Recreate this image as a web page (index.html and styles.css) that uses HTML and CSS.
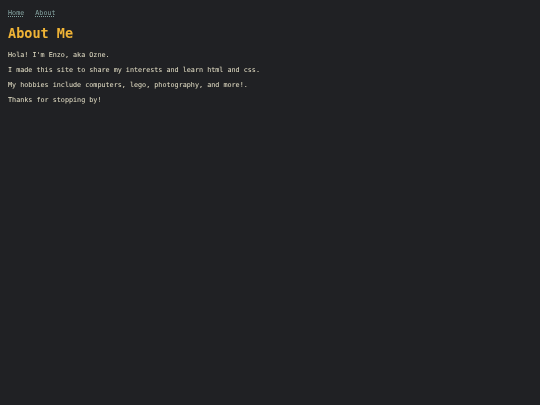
FILE: index.html
```html
<!DOCTYPE html>
<html lang="en">
<head>
<meta charset="utf-8">
<title>About Me</title>
<link rel="stylesheet" href="styles.css">
</head>
<body>
<nav class="nav">
  <a href="#" class="nav-link">Home</a>
  <a href="#" class="nav-link">About</a>
</nav>
<main class="content">
  <h1 class="title">About Me</h1>
  <p class="text">Hola! I'm Enzo, aka Ozne.</p>
  <p class="text">I made this site to share my interests and learn html and css.</p>
  <p class="text">My hobbies include computers, lego, photography, and more!.</p>
  <p class="text">Thanks for stopping by!</p>
</main>
</body>
</html>
```
FILE: styles.css
```css
html {
  background: #202124;
}
body {
  margin: 8px;
  font-family: "DejaVu Sans Mono", monospace;
  font-size: 6.75px;
  color: #e4dfc6;
  will-change: transform;
  -webkit-font-smoothing: antialiased;
}
.nav {
  display: flex;
  gap: 11px;
  margin-top: 1px;
}
.nav-link {
  color: #84a3a0;
  text-decoration: underline dotted;
}
.title {
  color: #f0b436;
  font-size: 13.5px;
  margin: 8px 0 10px;
}
.text {
  margin: 7px 0;
}
```
